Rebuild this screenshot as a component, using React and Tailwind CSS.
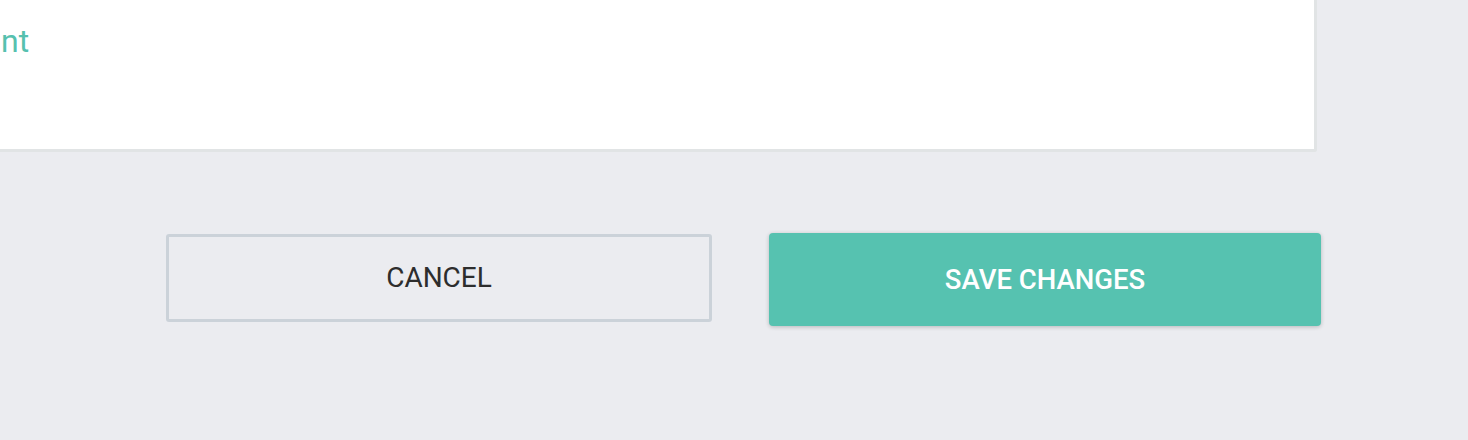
export default function App() {
  return (
    <div className="w-[1468px] h-[440px] bg-[#ebecf0] overflow-hidden" style={{ fontFamily: 'Roboto, "Liberation Sans", sans-serif' }}>
      {/* Card tail */}
      <div className="w-[1317px] h-[152px] bg-white border-r-[3px] border-b-[3px] border-[#e1e4e5] rounded-br-[3px]">
        <div className="pt-[20px] pl-[1px] text-[32px] leading-[42px] text-[#56c1af]">nt</div>
      </div>

      {/* Actions */}
      <div className="flex items-start pl-[166px] pt-[81px] gap-[57px]">
        <button
          type="button"
          className="mt-[1px] w-[546px] h-[88px] border-[3px] border-[#cbd2d9] rounded-[3px] bg-transparent text-[28px] text-[#2d2d2d] uppercase"
        >
          Cancel
        </button>
        <button
          type="button"
          className="w-[552px] h-[93px] rounded-[4px] bg-[#56c2b0] text-white text-[27.5px] font-medium uppercase shadow-[0_1px_4px_rgba(0,0,0,0.22)]"
        >
          Save Changes
        </button>
      </div>
    </div>
  )
}
